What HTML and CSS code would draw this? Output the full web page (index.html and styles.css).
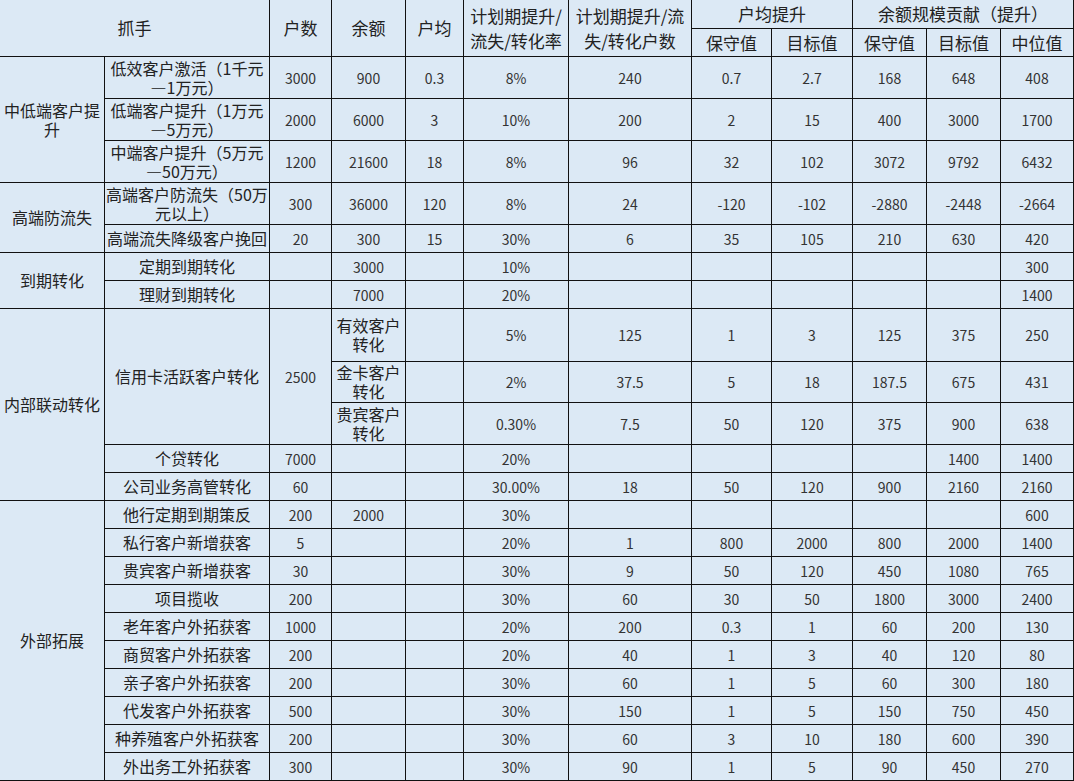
FILE: index.html
```html
<!DOCTYPE html>
<html lang="zh-CN">
<head>
<meta charset="utf-8">
<title>抓手</title>
<link rel="stylesheet" href="styles.css">
</head>
<body>
<div class="sheet">
  <div class="c h cs2 rs2">抓手</div>
  <div class="c h rs2">户数</div>
  <div class="c h rs2">余额</div>
  <div class="c h rs2">户均</div>
  <div class="c h rs2 ml">计划期提升/<br>流失/转化率</div>
  <div class="c h rs2 ml">计划期提升/流<br>失/转化户数</div>
  <div class="c h cs2">户均提升</div>
  <div class="c h cs3">余额规模贡献（提升）</div>
  <div class="c h">保守值</div>
  <div class="c h">目标值</div>
  <div class="c h">保守值</div>
  <div class="c h">目标值</div>
  <div class="c h">中位值</div>

  <div class="c t rs3">中低端客户提<br>升</div>
  <div class="c t">低效客户激活（1千元<br>—1万元）</div>
  <div class="c">3000</div><div class="c">900</div><div class="c">0.3</div><div class="c">8%</div><div class="c">240</div><div class="c">0.7</div><div class="c">2.7</div><div class="c">168</div><div class="c">648</div><div class="c">408</div>
  <div class="c t">低端客户提升（1万元<br>—5万元）</div>
  <div class="c">2000</div><div class="c">6000</div><div class="c">3</div><div class="c">10%</div><div class="c">200</div><div class="c">2</div><div class="c">15</div><div class="c">400</div><div class="c">3000</div><div class="c">1700</div>
  <div class="c t">中端客户提升（5万元<br>—50万元）</div>
  <div class="c">1200</div><div class="c">21600</div><div class="c">18</div><div class="c">8%</div><div class="c">96</div><div class="c">32</div><div class="c">102</div><div class="c">3072</div><div class="c">9792</div><div class="c">6432</div>

  <div class="c t rs2">高端防流失</div>
  <div class="c t">高端客户防流失（50万<br>元以上）</div>
  <div class="c">300</div><div class="c">36000</div><div class="c">120</div><div class="c">8%</div><div class="c">24</div><div class="c">-120</div><div class="c">-102</div><div class="c">-2880</div><div class="c">-2448</div><div class="c">-2664</div>
  <div class="c t">高端流失降级客户挽回</div>
  <div class="c">20</div><div class="c">300</div><div class="c">15</div><div class="c">30%</div><div class="c">6</div><div class="c">35</div><div class="c">105</div><div class="c">210</div><div class="c">630</div><div class="c">420</div>

  <div class="c t rs2">到期转化</div>
  <div class="c t">定期到期转化</div>
  <div class="c"></div><div class="c">3000</div><div class="c"></div><div class="c">10%</div><div class="c"></div><div class="c"></div><div class="c"></div><div class="c"></div><div class="c"></div><div class="c">300</div>
  <div class="c t">理财到期转化</div>
  <div class="c"></div><div class="c">7000</div><div class="c"></div><div class="c">20%</div><div class="c"></div><div class="c"></div><div class="c"></div><div class="c"></div><div class="c"></div><div class="c">1400</div>

  <div class="c t rs5">内部联动转化</div>
  <div class="c t rs3">信用卡活跃客户转化</div>
  <div class="c rs3">2500</div>
  <div class="c t">有效客户<br>转化</div><div class="c"></div><div class="c">5%</div><div class="c">125</div><div class="c">1</div><div class="c">3</div><div class="c">125</div><div class="c">375</div><div class="c">250</div>
  <div class="c t">金卡客户<br>转化</div><div class="c"></div><div class="c">2%</div><div class="c">37.5</div><div class="c">5</div><div class="c">18</div><div class="c">187.5</div><div class="c">675</div><div class="c">431</div>
  <div class="c t">贵宾客户<br>转化</div><div class="c"></div><div class="c">0.30%</div><div class="c">7.5</div><div class="c">50</div><div class="c">120</div><div class="c">375</div><div class="c">900</div><div class="c">638</div>
  <div class="c t">个贷转化</div>
  <div class="c">7000</div><div class="c"></div><div class="c"></div><div class="c">20%</div><div class="c"></div><div class="c"></div><div class="c"></div><div class="c"></div><div class="c">1400</div><div class="c">1400</div>
  <div class="c t">公司业务高管转化</div>
  <div class="c">60</div><div class="c"></div><div class="c"></div><div class="c">30.00%</div><div class="c">18</div><div class="c">50</div><div class="c">120</div><div class="c">900</div><div class="c">2160</div><div class="c">2160</div>

  <div class="c t rs10">外部拓展</div>
  <div class="c t">他行定期到期策反</div>
  <div class="c">200</div><div class="c">2000</div><div class="c"></div><div class="c">30%</div><div class="c"></div><div class="c"></div><div class="c"></div><div class="c"></div><div class="c"></div><div class="c">600</div>
  <div class="c t">私行客户新增获客</div>
  <div class="c">5</div><div class="c"></div><div class="c"></div><div class="c">20%</div><div class="c">1</div><div class="c">800</div><div class="c">2000</div><div class="c">800</div><div class="c">2000</div><div class="c">1400</div>
  <div class="c t">贵宾客户新增获客</div>
  <div class="c">30</div><div class="c"></div><div class="c"></div><div class="c">30%</div><div class="c">9</div><div class="c">50</div><div class="c">120</div><div class="c">450</div><div class="c">1080</div><div class="c">765</div>
  <div class="c t">项目揽收</div>
  <div class="c">200</div><div class="c"></div><div class="c"></div><div class="c">30%</div><div class="c">60</div><div class="c">30</div><div class="c">50</div><div class="c">1800</div><div class="c">3000</div><div class="c">2400</div>
  <div class="c t">老年客户外拓获客</div>
  <div class="c">1000</div><div class="c"></div><div class="c"></div><div class="c">20%</div><div class="c">200</div><div class="c">0.3</div><div class="c">1</div><div class="c">60</div><div class="c">200</div><div class="c">130</div>
  <div class="c t">商贸客户外拓获客</div>
  <div class="c">200</div><div class="c"></div><div class="c"></div><div class="c">20%</div><div class="c">40</div><div class="c">1</div><div class="c">3</div><div class="c">40</div><div class="c">120</div><div class="c">80</div>
  <div class="c t">亲子客户外拓获客</div>
  <div class="c">200</div><div class="c"></div><div class="c"></div><div class="c">30%</div><div class="c">60</div><div class="c">1</div><div class="c">5</div><div class="c">60</div><div class="c">300</div><div class="c">180</div>
  <div class="c t">代发客户外拓获客</div>
  <div class="c">500</div><div class="c"></div><div class="c"></div><div class="c">30%</div><div class="c">150</div><div class="c">1</div><div class="c">5</div><div class="c">150</div><div class="c">750</div><div class="c">450</div>
  <div class="c t">种养殖客户外拓获客</div>
  <div class="c">200</div><div class="c"></div><div class="c"></div><div class="c">30%</div><div class="c">60</div><div class="c">3</div><div class="c">10</div><div class="c">180</div><div class="c">600</div><div class="c">390</div>
  <div class="c t">外出务工外拓获客</div>
  <div class="c">300</div><div class="c"></div><div class="c"></div><div class="c">30%</div><div class="c">90</div><div class="c">1</div><div class="c">5</div><div class="c">90</div><div class="c">450</div><div class="c">270</div>
</div>
</body>
</html>
```

FILE: styles.css
```css
html, body {
  margin: 0;
  padding: 0;
  background: #dce9f5;
}

.sheet {
  display: grid;
  width: 1074px;
  box-sizing: border-box;
  grid-template-columns: 104px 164px 61px 73px 57px 104px 122px 79px 80px 73px 73px 72px;
  grid-template-rows: 28px 27px 41px 41px 41px 41px 27px 27px 27px 52px 40px 41px 27px 27px repeat(10, 27px);
  gap: 1px;
  padding: 0 1px 1px 0;
  background: #111;
  font-family: "Noto Sans CJK SC", "Noto Sans", sans-serif;
  color: #2a2a2a;
}

.c {
  background: #dce9f5;
  display: flex;
  align-items: center;
  justify-content: center;
  text-align: center;
  font-size: 14px;
  line-height: 20px;
  white-space: nowrap;
  color: #333;
}

.t {
  font-size: 16px;
  line-height: 19px;
  color: #222;
}

.h {
  font-size: 17px;
  line-height: 24px;
  color: #222;
}

.ml {
  line-height: 25px;
}

.cs2 { grid-column: span 2; }
.cs3 { grid-column: span 3; }
.rs2 { grid-row: span 2; }
.rs3 { grid-row: span 3; }
.rs5 { grid-row: span 5; }
.rs10 { grid-row: span 10; }
```
